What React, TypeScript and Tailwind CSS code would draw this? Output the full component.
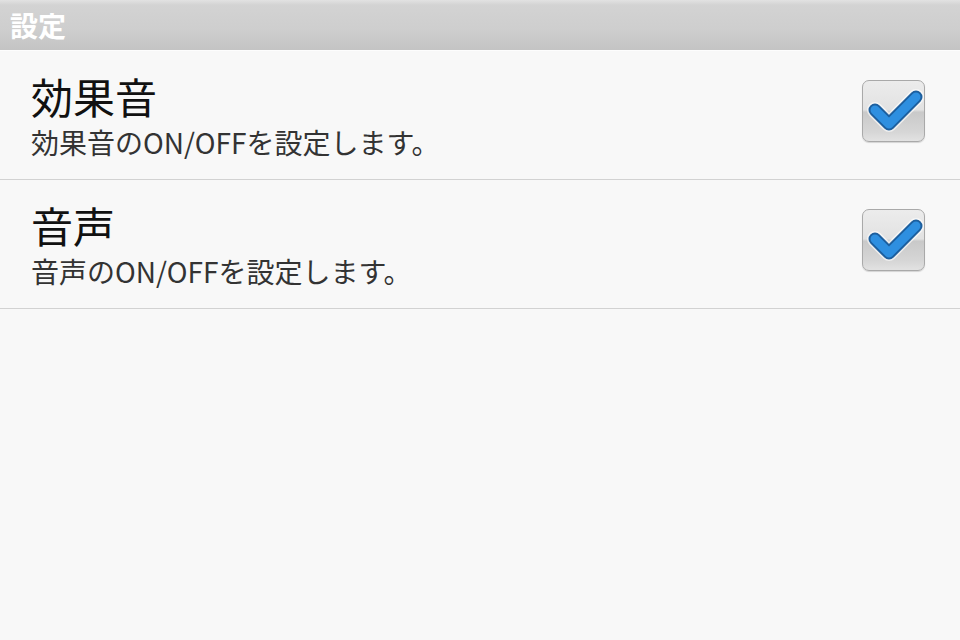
import React from "react";

const font = { fontFamily: '"Noto Sans CJK JP", "Noto Sans", sans-serif' };

function CheckBox() {
  return (
    <div className="relative w-[63px] h-[62px] rounded-[7px] border border-[#a9a9a9] overflow-hidden shadow-[0_1px_1px_rgba(0,0,0,0.15)] bg-[linear-gradient(to_bottom,#ececec_0%,#e2e2e2_48%,#c9c9c9_52%,#d6d6d6_85%,#e2e2e2_100%)]">
      <svg width="63" height="62" viewBox="0 0 63 62" className="absolute left-0 top-0">
        <polyline
          points="12,29 26,43 53,16"
          fill="none"
          stroke="#ffffff"
          strokeOpacity="0.6"
          strokeWidth="16"
          strokeLinecap="round"
          strokeLinejoin="round"
        />
        <polyline
          points="12,29 26,43 53,16"
          fill="none"
          stroke="#1d5f9e"
          strokeWidth="13"
          strokeLinecap="round"
          strokeLinejoin="round"
        />
        <polyline
          points="12,29 26,43 53,16"
          fill="none"
          stroke="#2e8fe0"
          strokeWidth="9"
          strokeLinecap="round"
          strokeLinejoin="round"
        />
      </svg>
    </div>
  );
}

function Row({ title, desc }: { title: string; desc: string }) {
  return (
    <div className="flex items-center justify-between border-b border-[#d2d2d2] pl-[31px] pr-[35px] pt-[20px] pb-[20px]">
      <div className="flex flex-col gap-[5px]">
        <div className="text-[42px] leading-[50px] text-[#111111]">{title}</div>
        <div className="text-[28px] leading-[33px] text-[#333333]">{desc}</div>
      </div>
      <div className="mb-[8px]">
        <CheckBox />
      </div>
    </div>
  );
}

export default function App() {
  return (
    <div className="w-[960px] h-[640px] bg-[#f8f8f8] overflow-hidden" style={font}>
      <div className="h-[50px] bg-[linear-gradient(to_bottom,#e2e2e2_0%,#d3d3d3_10%,#cecece_60%,#c4c4c4_100%)] flex items-center pl-[10px]">
        <span className="text-[28px] leading-[30px] font-bold text-white">設定</span>
      </div>
      <div className="h-px bg-[#fdfdfd]" />
      <Row title="効果音" desc="効果音のON/OFFを設定します。" />
      <Row title="音声" desc="音声のON/OFFを設定します。" />
    </div>
  );
}
